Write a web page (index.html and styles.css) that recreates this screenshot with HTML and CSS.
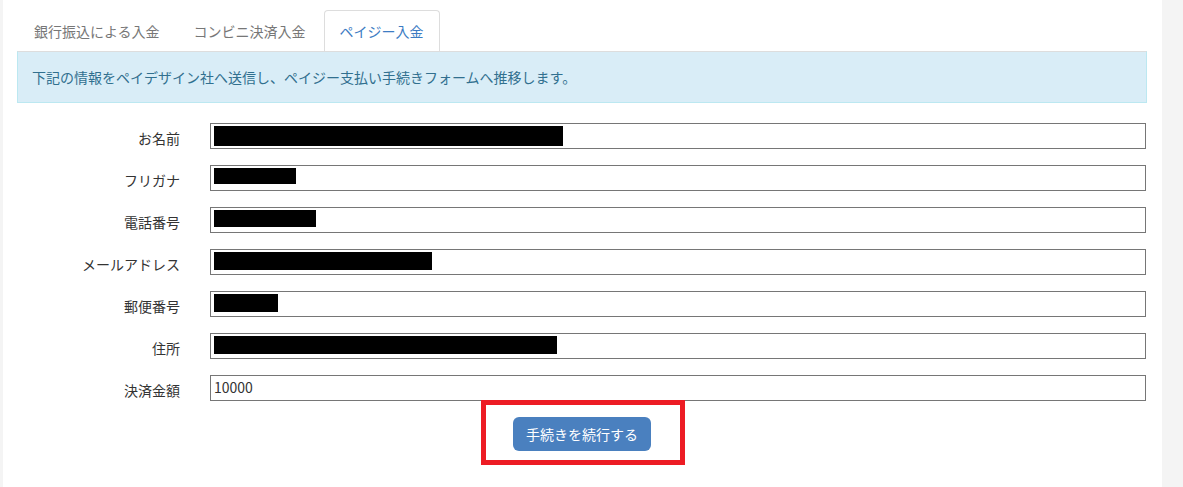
FILE: index.html
```html
<!DOCTYPE html>
<html lang="ja">
<head>
  <meta charset="UTF-8">
  <title>ペイジー入金</title>
  <link rel="stylesheet" href="styles.css">
</head>
<body>
  <div class="page">
    <ul class="tabs">
      <li class="tab">銀行振込による入金</li>
      <li class="tab">コンビニ決済入金</li>
      <li class="tab active">ペイジー入金</li>
    </ul>

    <div class="alert">下記の情報をペイデザイン社へ送信し、ペイジー支払い手続きフォームへ推移します。</div>

    <form class="form">
      <div class="row">
        <label>お名前</label>
        <div class="field"><span class="mask" style="width:349px;height:20px"></span></div>
      </div>
      <div class="row">
        <label>フリガナ</label>
        <div class="field"><span class="mask" style="width:82px;height:16px"></span></div>
      </div>
      <div class="row">
        <label>電話番号</label>
        <div class="field"><span class="mask" style="width:102px;height:17px"></span></div>
      </div>
      <div class="row">
        <label>メールアドレス</label>
        <div class="field"><span class="mask" style="width:218px;height:18px"></span></div>
      </div>
      <div class="row">
        <label>郵便番号</label>
        <div class="field"><span class="mask" style="width:64px;height:18px"></span></div>
      </div>
      <div class="row">
        <label>住所</label>
        <div class="field"><span class="mask" style="width:343px;height:18px"></span></div>
      </div>
      <div class="row">
        <label>決済金額</label>
        <div class="field value">10000</div>
      </div>

      <div class="actions">
        <div class="btn-wrap">
          <button type="button" class="btn">手続きを続行する</button>
          <span class="highlight"></span>
        </div>
      </div>
    </form>
  </div>
</body>
</html>
```

FILE: styles.css
```css
body {
  margin: 0;
  background-color: #f4f4f4;
  font-family: "Noto Sans CJK JP", "Liberation Sans", sans-serif;
  font-size: 14px;
  color: #333;
}

.page {
  width: 1145px;
  height: 487px;
  margin-left: 3px;
  padding-left: 14px;
  background-color: #fff;
  overflow: hidden;
}

/* タブ */
.tabs {
  display: flex;
  list-style: none;
  margin: 0;
  padding: 10px 0 0 1px;
  width: 1129px;
}
.tab {
  padding: 10px 15px;
  margin-right: 2px;
  line-height: 20px;
  color: #777;
  border: 1px solid transparent;
  border-bottom: none;
  border-radius: 4px 4px 0 0;
}
.tab.active {
  color: #3d7cc3;
  border-color: #ddd;
  background-color: #fff;
}

/* お知らせ */
.alert {
  width: 1100px;
  padding: 15px 14px;
  line-height: 20px;
  background-color: #d9edf7;
  border: 1px solid #bce8f1;
  border-top-color: #ddd;
  color: #31708f;
}

/* フォーム */
.form {
  width: 1129px;
  padding-top: 20px;
}
.row {
  display: grid;
  grid-template-columns: 163px 1fr;
  column-gap: 30px;
  align-items: center;
  margin-bottom: 16px;
}
.row label {
  text-align: right;
  line-height: 20px;
  padding-top: 4px;
}
.field {
  box-sizing: border-box;
  height: 26px;
  border: 1px solid #767676;
  padding: 2px 0 0 3px;
  line-height: 20px;
}
.field.value {
  padding-top: 1px;
  color: #333;
}
.mask {
  display: block;
  background-color: #000;
}

.actions {
  display: flex;
  justify-content: center;
  padding-left: 1px;
}
.btn-wrap {
  position: relative;
}
.btn {
  width: 138px;
  height: 34px;
  padding: 0;
  border: none;
  border-radius: 6px;
  background-color: #4a80bf;
  color: #fff;
  font-family: inherit;
  font-size: 14px;
}
.highlight {
  position: absolute;
  top: -17px;
  left: -32px;
  right: -34px;
  bottom: -14px;
  border: 5px solid #ed1c24;
}
```
